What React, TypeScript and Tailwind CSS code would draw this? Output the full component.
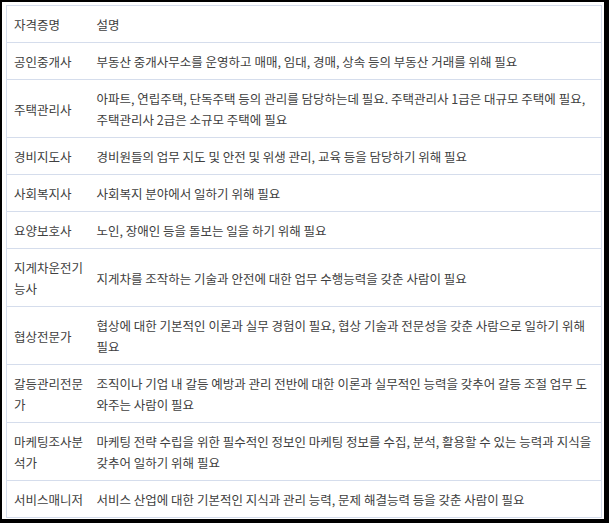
const rows: [string, string][] = [
  ["공인중개사", "부동산 중개사무소를 운영하고 매매, 임대, 경매, 상속 등의 부동산 거래를 위해 필요"],
  ["주택관리사", "아파트, 연립주택, 단독주택 등의 관리를 담당하는데 필요. 주택관리사 1급은 대규모 주택에 필요, 주택관리사 2급은 소규모 주택에 필요"],
  ["경비지도사", "경비원들의 업무 지도 및 안전 및 위생 관리, 교육 등을 담당하기 위해 필요"],
  ["사회복지사", "사회복지 분야에서 일하기 위해 필요"],
  ["요양보호사", "노인, 장애인 등을 돌보는 일을 하기 위해 필요"],
  ["지게차운전기능사", "지게차를 조작하는 기술과 안전에 대한 업무 수행능력을 갖춘 사람이 필요"],
  ["협상전문가", "협상에 대한 기본적인 이론과 실무 경험이 필요, 협상 기술과 전문성을 갖춘 사람으로 일하기 위해 필요"],
  ["갈등관리전문가", "조직이나 기업 내 갈등 예방과 관리 전반에 대한 이론과 실무적인 능력을 갖추어 갈등 조절 업무 도와주는 사람이 필요"],
  ["마케팅조사분석가", "마케팅 전략 수립을 위한 필수적인 정보인 마케팅 정보를 수집, 분석, 활용할 수 있는 능력과 지식을 갖추어 일하기 위해 필요"],
  ["서비스매니저", "서비스 산업에 대한 기본적인 지식과 관리 능력, 문제 해결능력 등을 갖춘 사람이 필요"],
];

const cell = "pt-[8px] pb-[7px] align-middle text-left";

export default function App() {
  return (
    <div className="h-[523px] w-[609px] bg-black pl-[2px] pt-[2px] pr-[5px] pb-[4px] font-['Noto_Sans_CJK_KR','Noto_Sans',sans-serif]">
      <div className="h-full bg-white pl-[4px] pt-[3px] pr-[2px]">
        <table className="w-full table-fixed border-collapse border border-[#d5ddec] text-[12.5px] leading-[21px] text-[#404040]">
          <colgroup>
            <col className="w-[84px]" />
            <col />
          </colgroup>
          <thead>
            <tr className="border-b border-[#d5ddec]">
              <th className={`${cell} pl-[7px] pr-[6px] font-normal`}>자격증명</th>
              <th className={`${cell} px-[6px] font-normal`}>설명</th>
            </tr>
          </thead>
          <tbody>
            {rows.map(([name, desc]) => (
              <tr key={name} className="border-b border-[#d5ddec]">
                <td className={`${cell} pl-[7px] pr-[6px]`}>{name}</td>
                <td className={`${cell} px-[6px]`}>{desc}</td>
              </tr>
            ))}
          </tbody>
        </table>
      </div>
    </div>
  );
}
